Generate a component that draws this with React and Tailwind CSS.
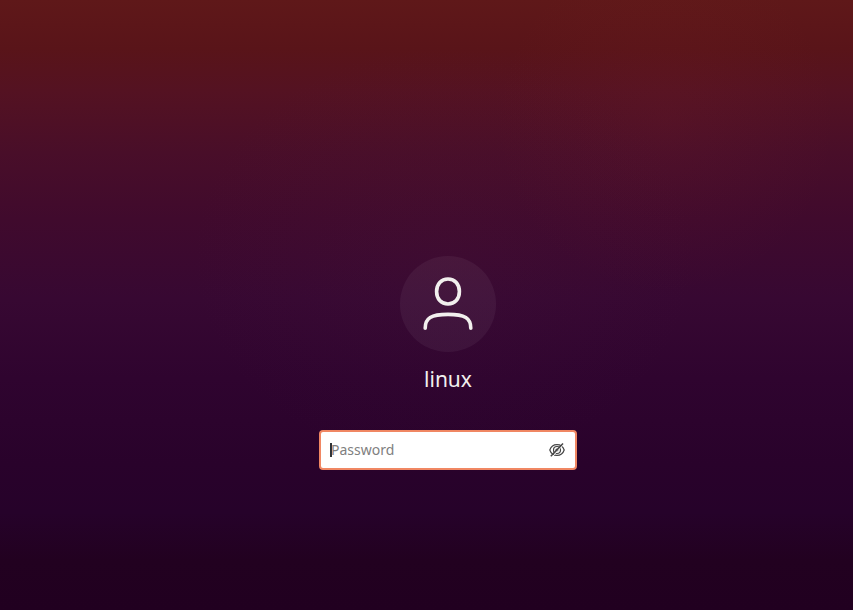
function UserIcon() {
  return (
    <svg viewBox="0 0 96 96" className="size-24" fill="none" stroke="#f2f0ee" strokeWidth="3.6" strokeLinecap="round" aria-hidden="true">
      <path d="M48 23C54.8 23 59.4 28 59.4 35.500C59.400 43 54.8 48 48 48C41.2 48 36.600 43 36.600 35.500C36.600 28 41.2 23 48 23Z" />
      <path d="M25.200 72.200C25.200 62 31 58.400 48 58.400C65 58.400 70.800 62 70.800 72.200" />
    </svg>
  );
}

function HiddenIcon() {
  return (
    <svg viewBox="0 0 16 16" className="size-4" fill="none" stroke="#454545" aria-hidden="true">
      <path d="M0.800 8C2 4.500 4.500 2.600 8 2.600C11.500 2.600 14 4.500 15.200 8C14 11.500 11.500 13.400 8 13.400C4.500 13.400 2 11.500 0.800 8Z" strokeWidth="1.200" />
      <circle cx="8" cy="8" r="3.500" strokeWidth="1.200" />
      <circle cx="8" cy="8" r="1.600" fill="#454545" stroke="none" />
      <path d="M3 15L15 2" stroke="#ffffff" strokeWidth="1" />
      <path d="M1.800 14.200L14 1.500" strokeWidth="1.500" />
    </svg>
  );
}

export default function App() {
  return (
    <main className="flex min-h-screen flex-col items-center bg-[radial-gradient(ellipse_20%_28%_at_78%_20%,#a0303014,transparent),radial-gradient(ellipse_30%_35%_at_52%_42%,#60305010,transparent),linear-gradient(to_bottom,#5f1819_0%,#591419_8%,#541222_15%,#490e29_25%,#400a2d_36%,#370832_49%,#2f042f_62%,#29022b_76%,#26022a_84%,#220120_92%,#210020_100%)] pt-64 pl-[43px] font-['Noto_Sans',sans-serif]">
      <div className="rounded-full bg-white/5">
        <UserIcon />
      </div>
      <h1 className="mt-3 text-[21px] leading-[30px] text-[#f2f0ee]">linux</h1>
      <form className="mt-9 flex h-10 w-[258px] items-center rounded border-2 border-[#f08763] bg-white pr-2.5 pl-[9px]" onSubmit={(e) => e.preventDefault()}>
        <span className="h-[14px] w-0.5 shrink-0 bg-[#303436]" />
        <input
          id="password"
          type="password"
          aria-label="Password"
          placeholder="Password"
          className="-ml-px min-w-0 flex-1 bg-transparent text-[14px] leading-5 text-[#3d3d3d] outline-none placeholder:text-[#808080]"
        />
        <button type="button" aria-label="Show password" className="shrink-0">
          <HiddenIcon />
        </button>
      </form>
    </main>
  );
}
